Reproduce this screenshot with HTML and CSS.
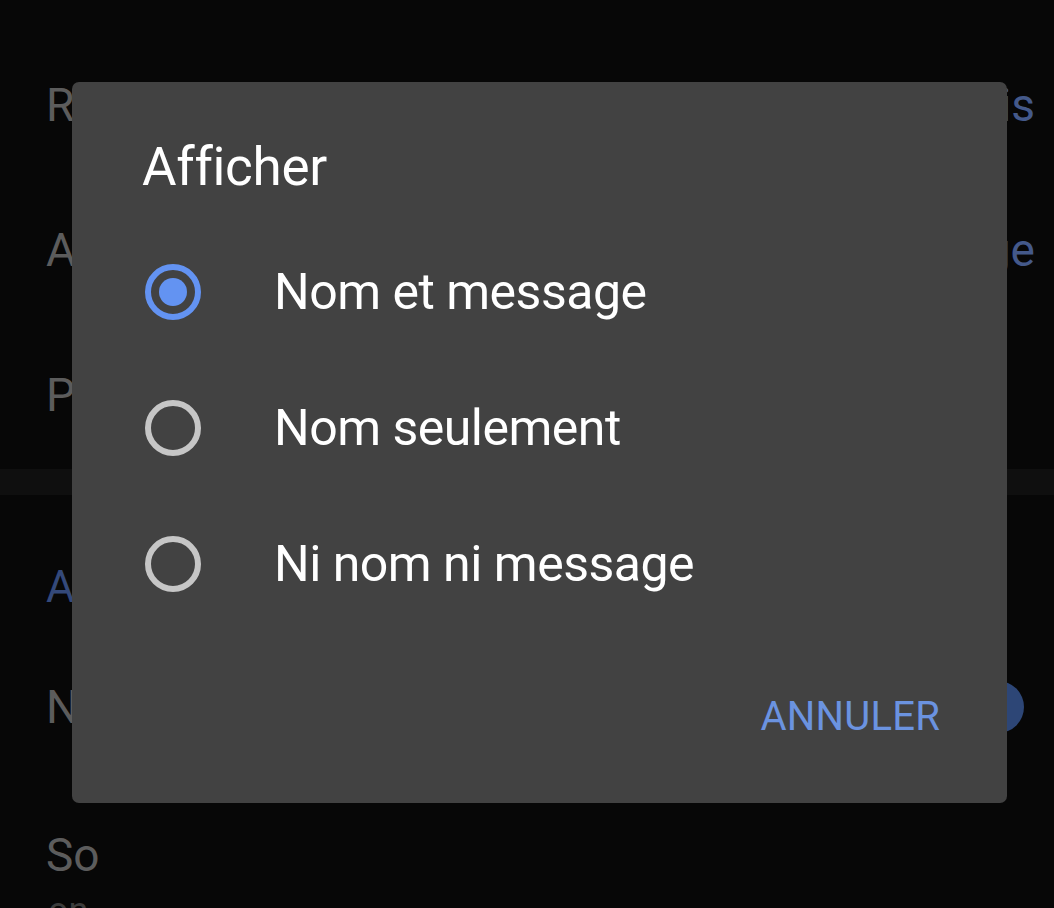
FILE: index.html
```html
<!DOCTYPE html>
<html lang="fr">
<head>
<meta charset="utf-8">
<title>Afficher</title>
<link rel="stylesheet" href="styles.css">
</head>
<body>
<div class="screen">
  <div class="settings">
    <div class="row"><span class="label">Rappels</span><span class="value">Jamais</span></div>
    <div class="row"><span class="label">Afficher</span><span class="value">Nom et message</span></div>
    <div class="row"><span class="label">Priorité</span></div>
    <div class="band"></div>
    <div class="section">Appels</div>
    <div class="row row-toggle"><span class="label">Notifications</span><span class="toggle"></span></div>
    <div class="row row-two"><span class="label">So</span><span class="sub">on</span></div>
  </div>
  <div class="dialog">
    <div class="title">Afficher</div>
    <div class="options">
      <div class="option"><span class="radio checked"><span class="dot"></span></span><span class="opt-text">Nom et message</span></div>
      <div class="option"><span class="radio"></span><span class="opt-text">Nom seulement</span></div>
      <div class="option"><span class="radio"></span><span class="opt-text">Ni nom ni message</span></div>
    </div>
    <div class="actions"><span class="btn">ANNULER</span></div>
  </div>
</div>
</body>
</html>
```
FILE: styles.css
```css
* { box-sizing: border-box; }
html, body {
  margin: 0;
  padding: 0;
  background: #070707;
  font-family: Roboto, "Liberation Sans", Arial, sans-serif;
}
.screen {
  position: relative;
  width: 1054px;
  height: 908px;
  overflow: hidden;
  background: #070707;
}
.settings {
  display: flex;
  flex-direction: column;
  padding-top: 32px;
}
.row {
  display: flex;
  align-items: center;
  justify-content: space-between;
  height: 145px;
  padding: 0 19px 0 46px;
  font-size: 46px;
  line-height: 1;
}
.label { color: #5c5c5c; }
.value { color: #44598a; }
.band {
  height: 26px;
  background: #0f0f0f;
  margin-top: 2px;
}
.section {
  height: 184px;
  display: flex;
  align-items: center;
  padding-left: 46px;
  font-size: 44px;
  color: #34497a;
}
.row-toggle { height: 56px; padding-right: 30px; }
.toggle {
  width: 52px;
  height: 52px;
  border-radius: 50%;
  background: #2d4676;
}
.row-two {
  height: auto;
  flex-direction: column;
  align-items: flex-start;
  justify-content: flex-start;
  padding-top: 97px;
}
.sub { color: #3c3c3c; font-size: 36px; margin-top: 15px; padding-left: 2px; }
.dialog {
  position: absolute;
  left: 72px;
  top: 82px;
  width: 935px;
  height: 721px;
  background: #424242;
  border-radius: 7px;
  padding: 55px 67px 0 70px;
  display: flex;
  flex-direction: column;
}
.title {
  color: #ffffff;
  font-size: 53px;
  line-height: 60px;
  letter-spacing: -0.3px;
}
.options {
  display: flex;
  flex-direction: column;
  margin-top: 27px;
}
.option {
  height: 136px;
  display: flex;
  align-items: center;
  gap: 73px;
  padding-left: 3px;
}
.radio {
  width: 56px;
  height: 56px;
  border-radius: 50%;
  border: 6px solid #c6c6c6;
  display: flex;
  align-items: center;
  justify-content: center;
  flex: none;
}
.radio.checked { border-color: #6393f2; }
.dot {
  width: 28px;
  height: 28px;
  border-radius: 50%;
  background: #6393f2;
}
.opt-text {
  color: #ffffff;
  font-size: 50px;
  line-height: 1;
  letter-spacing: -0.5px;
}
.actions {
  display: flex;
  justify-content: flex-end;
  margin-top: 55px;
}
.btn {
  color: #6b93e0;
  font-size: 40px;
  line-height: 60px;
  letter-spacing: 0.2px;
}
```
